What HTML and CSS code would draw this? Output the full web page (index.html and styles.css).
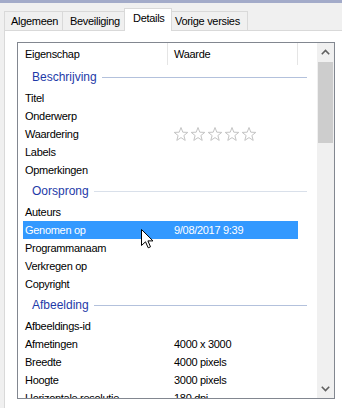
FILE: index.html
```html
<!DOCTYPE html>
<html>
<head>
<meta charset="utf-8">
<link rel="stylesheet" href="styles.css">
</head>
<body>
<div class="titlebar"></div>
<div class="tabs">
  <div class="tab tab-1">Algemeen</div>
  <div class="tab tab-2">Beveiliging</div>
  <div class="tab tab-3 selected">Details</div>
  <div class="tab tab-4">Vorige versies</div>
</div>
<div class="panel">
  <div class="listbox">
    <div class="content">
      <div class="header">
        <div class="hcol hcol-1">Eigenschap</div>
        <div class="hcol hcol-2">Waarde</div>
      </div>
      <div class="rows">
        <div class="group"><span>Beschrijving</span><i class="line"></i></div>
        <div class="row"><span class="name">Titel</span><span class="val"></span></div>
        <div class="row"><span class="name">Onderwerp</span><span class="val"></span></div>
        <div class="row"><span class="name">Waardering</span><span class="val stars">
          <svg width="85" height="16" viewBox="0 0 85 16">
            <g fill="none" stroke="#c4c4c4" stroke-width="1">
              <path d="M8 1.5 L9.8 6.2 L14.8 6.4 L10.9 9.5 L12.2 14.4 L8 11.6 L3.8 14.4 L5.1 9.5 L1.2 6.4 L6.2 6.2 Z"/>
              <path transform="translate(17 0)" d="M8 1.5 L9.8 6.2 L14.8 6.4 L10.9 9.5 L12.2 14.4 L8 11.6 L3.8 14.4 L5.1 9.5 L1.2 6.4 L6.2 6.2 Z"/>
              <path transform="translate(34 0)" d="M8 1.5 L9.8 6.2 L14.8 6.4 L10.9 9.5 L12.2 14.4 L8 11.6 L3.8 14.4 L5.1 9.5 L1.2 6.4 L6.2 6.2 Z"/>
              <path transform="translate(51 0)" d="M8 1.5 L9.8 6.2 L14.8 6.4 L10.9 9.5 L12.2 14.4 L8 11.6 L3.8 14.4 L5.1 9.5 L1.2 6.4 L6.2 6.2 Z"/>
              <path transform="translate(68 0)" d="M8 1.5 L9.8 6.2 L14.8 6.4 L10.9 9.5 L12.2 14.4 L8 11.6 L3.8 14.4 L5.1 9.5 L1.2 6.4 L6.2 6.2 Z"/>
            </g>
          </svg></span></div>
        <div class="row"><span class="name">Labels</span><span class="val"></span></div>
        <div class="row"><span class="name">Opmerkingen</span><span class="val"></span></div>
        <div class="group light"><span>Oorsprong</span><i class="line"></i></div>
        <div class="row"><span class="name">Auteurs</span><span class="val"></span></div>
        <div class="row active"><span class="name">Genomen op</span><span class="val">9/08/2017 9:39</span></div>
        <div class="row"><span class="name">Programmanaam</span><span class="val"></span></div>
        <div class="row"><span class="name">Verkregen op</span><span class="val"></span></div>
        <div class="row"><span class="name">Copyright</span><span class="val"></span></div>
        <div class="group"><span>Afbeelding</span><i class="line"></i></div>
        <div class="row"><span class="name">Afbeeldings-id</span><span class="val"></span></div>
        <div class="row"><span class="name">Afmetingen</span><span class="val">4000 x 3000</span></div>
        <div class="row"><span class="name">Breedte</span><span class="val">4000 pixels</span></div>
        <div class="row"><span class="name">Hoogte</span><span class="val">3000 pixels</span></div>
        <div class="row"><span class="name">Horizontale resolutie</span><span class="val">180 dpi</span></div>
      </div>
    </div>
    <div class="scrollbar">
      <div class="sb-btn">
        <svg width="9" height="6" viewBox="0 0 9 6"><path d="M0.8 5.2 L4.5 1.5 L8.2 5.2" fill="none" stroke="#606060" stroke-width="1.6"/></svg>
      </div>
      <div class="sb-track"><div class="sb-thumb"></div></div>
      <div class="sb-btn">
        <svg width="9" height="6" viewBox="0 0 9 6"><path d="M0.8 0.8 L4.5 4.5 L8.2 0.8" fill="none" stroke="#606060" stroke-width="1.6"/></svg>
      </div>
    </div>
  </div>
</div>
<svg class="cursor" width="13" height="20" viewBox="0 0 13 20">
  <path d="M0.5 0.5 L0.5 16.5 L4.5 12.8 L7.2 18.8 L9.5 17.8 L6.9 11.9 L12 11.9 Z" fill="#fff" stroke="#000" stroke-width="1" stroke-linejoin="miter"/>
</svg>
</body>
</html>
```

FILE: styles.css
```css
html, body {
  margin: 0;
  padding: 0;
}
body {
  width: 342px;
  height: 408px;
  overflow: hidden;
  background: #f0f0f0;
  font-family: "Liberation Sans", Arial, sans-serif;
  font-size: 11px;
  letter-spacing: -0.3px;
  color: #000;
  position: relative;
}
.titlebar {
  height: 3px;
  background: #a3abc9;
}
.tabs {
  display: flex;
  align-items: flex-end;
  height: 27px;
  padding-left: 4px;
  position: relative;
  z-index: 2;
}
.tab {
  box-sizing: border-box;
  height: 19px;
  border: 1px solid #d9d9d9;
  border-bottom: none;
  margin-left: -1px;
  padding-left: 6px;
  line-height: 18px;
  background: #f0f0f0;
  white-space: nowrap;
}
.tab-1 { width: 59px; margin-left: 0; }
.tab-2 { width: 63px; padding-left: 7px; }
.tab-3 { width: 48px; }
.tab-4 { width: 77px; padding-left: 3px; }
.tab.selected {
  height: 23px;
  margin-bottom: -1px;
  background: #fff;
  line-height: 19px;
  padding-left: 8px;
}
.panel {
  margin-left: 4px;
  height: 378px;
  box-sizing: border-box;
  background: #fff;
  border-top: 1px solid #d9d9d9;
  border-left: 1px solid #d9d9d9;
  padding: 11px 0 0 12px;
}
.listbox {
  box-sizing: border-box;
  width: 318px;
  height: 357px;
  border: 1px solid #828790;
  display: flex;
  background: #fff;
}
.content {
  width: 299px;
  overflow: hidden;
}
.header {
  display: flex;
  height: 22px;
}
.hcol {
  box-sizing: border-box;
  height: 22px;
  line-height: 22px;
  border-right: 1px solid #e5e5e5;
}
.hcol-1 { width: 150px; padding-left: 7px; }
.hcol-2 { width: 130px; padding-left: 6px; }
.rows {
  padding-left: 5px;
}
.row {
  display: grid;
  grid-template-columns: 151px 1fr;
  width: 275px;
  height: 18px;
  line-height: 18px;
  white-space: nowrap;
}
.row .name {
  padding-left: 2px;
  overflow: hidden;
}
.row.active {
  background: #3399ff;
  color: #fff;
}
.stars {
  display: flex;
  align-items: center;
  margin-left: -1px;
}
.stars svg {
  display: block;
}
.group {
  display: flex;
  align-items: center;
  gap: 5px;
  width: 284px;
  height: 24px;
  padding-left: 9px;
  box-sizing: border-box;
  color: #1e3aa8;
  font-size: 12px;
  letter-spacing: 0;
}
.group .line {
  flex: 1;
  height: 1px;
  background: #b3c1dc;
}
.group.light .line {
  background: #d9e0ea;
}
.scrollbar {
  width: 17px;
  background: #f0f0f0;
  display: flex;
  flex-direction: column;
}
.sb-btn {
  height: 18px;
  display: flex;
  align-items: center;
  justify-content: center;
}
.sb-track {
  flex: 1;
}
.sb-thumb {
  height: 81px;
  background: #cdcdcd;
  margin: 1px 1px 0 1px;
}
.cursor {
  position: absolute;
  left: 141px;
  top: 229px;
  z-index: 5;
}
```
